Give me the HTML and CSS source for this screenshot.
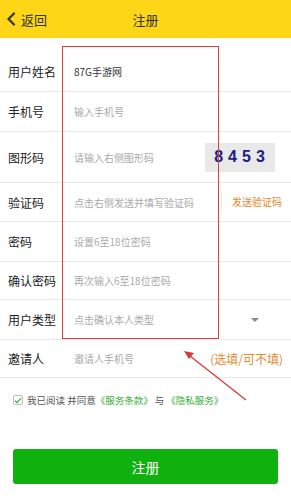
FILE: index.html
```html
<!DOCTYPE html>
<html lang="zh">
<head>
<meta charset="utf-8">
<title>注册</title>
<link rel="stylesheet" href="styles.css">
</head>
<body>
<div class="page">
  <header class="topbar">
    <div class="back">
      <svg class="chev" width="10" height="14" viewBox="0 0 10 14"><path d="M8 1.5 L2.5 7 L8 12.5" fill="none" stroke="#333" stroke-width="2.2" stroke-linecap="round" stroke-linejoin="round"/></svg>
      <span>返回</span>
    </div>
    <div class="title">注册</div>
    <div></div>
  </header>

  <form class="form">
    <div class="row r1"><span class="label">用户姓名</span><span class="field value">87G手游网</span></div>
    <div class="row r2"><span class="label">手机号</span><span class="field">输入手机号</span></div>
    <div class="row r3"><span class="label">图形码</span><span class="field">请输入右侧图形码</span><span class="captcha">8453</span></div>
    <div class="row r4"><span class="label">验证码</span><span class="field">点击右侧发送并填写验证码</span><span class="send">发送验证码</span></div>
    <div class="row r5"><span class="label">密码</span><span class="field">设置6至18位密码</span></div>
    <div class="row r6"><span class="label">确认密码</span><span class="field">再次输入6至18位密码</span></div>
    <div class="row r7"><span class="label">用户类型</span><span class="field">点击确认本人类型</span><span class="caret"></span></div>
    <div class="row r8"><span class="label">邀请人</span><span class="field">邀请人手机号</span><span class="optional">(选填/可不填)</span></div>
  </form>

  <div class="agree">
    <span class="check"><svg width="8" height="7" viewBox="0 0 8 7"><path d="M1 3.6 L3 5.6 L7 1.2" fill="none" stroke="#2fa82f" stroke-width="1.2"/></svg></span>
    <span>我已阅读 并同意</span><span class="link">《服务条款》</span><span class="and">与</span><span class="link">《隐私服务》</span>
  </div>

  <div class="btn-wrap"><button class="submit" type="button">注册</button></div>

  <div class="annot-box"></div>
  <svg class="annot-arrow" width="291" height="500" viewBox="0 0 291 500">
    <line x1="246" y1="400" x2="190" y2="356" stroke="#d6393a" stroke-width="1.3"/>
    <polygon points="184,351 194,353 189,359" fill="#d6393a"/>
  </svg>
</div>
</body>
</html>
```

FILE: styles.css
```css
* { box-sizing: border-box; }
html, body { margin: 0; padding: 0; background: #fff; }
body {
  font-family: "Noto Sans CJK SC", "Noto Sans", "Liberation Sans", sans-serif;
  color: #333;
}
.page {
  position: relative;
  width: 291px;
  height: 500px;
  overflow: hidden;
}
.topbar {
  height: 38px;
  background: #fcd617;
  display: grid;
  grid-template-columns: 1fr auto 1fr;
  align-items: center;
}
.back {
  display: flex;
  align-items: center;
  gap: 5px;
  padding-left: 6px;
  font-size: 13px;
  color: #333;
}
.chev { display: block; }
.title { font-size: 13px; color: #333; }

.form { margin-top: 14px; }
.row {
  display: flex;
  align-items: center;
  border-bottom: 1px solid #e8e8e8;
  height: 40px;
}
.r3 { height: 51px; }
.r4 { height: 39px; }
.r6 { height: 38px; }
.r8 { height: 38px; }
.label {
  width: 74px;
  padding-left: 8px;
  font-size: 12px;
  color: #222;
  flex: none;
}
.field {
  flex: 1;
  font-size: 10px;
  color: #aaa;
  white-space: nowrap;
}
.field.value { color: #333; }
.captcha {
  width: 70px;
  height: 29px;
  margin-right: 16px;
  background: #e9e9e9;
  color: #1d1d86;
  font-family: "Liberation Sans", sans-serif;
  font-weight: bold;
  font-size: 16px;
  letter-spacing: 5px;
  display: flex;
  align-items: center;
  justify-content: center;
  padding-left: 4px;
}
.send {
  font-size: 10px;
  color: #e8872c;
  border-left: 1px solid #eee;
  padding: 4px 9px 4px 10px;
  line-height: 14px;
}
.caret {
  width: 0; height: 0;
  border-left: 4px solid transparent;
  border-right: 4px solid transparent;
  border-top: 4px solid #8a8a8a;
  margin-right: 32px;
}
.optional {
  font-size: 12px;
  color: #e8892e;
  margin-right: 8px;
  white-space: nowrap;
}
.agree {
  display: flex;
  align-items: center;
  margin-top: 15px;
  padding-left: 13px;
  font-size: 9.5px;
  color: #555;
  white-space: nowrap;
}
.and { margin: 0 2px; }
.check {
  width: 10px; height: 10px;
  border: 1px solid #bbb;
  border-radius: 2px;
  display: flex;
  align-items: center;
  justify-content: center;
  margin-right: 4px;
}
.check svg { display: block; }
.link { color: #35ad35; }
.btn-wrap { padding: 0 13px; margin-top: 42px; }
.submit {
  width: 100%;
  height: 35px;
  border: none;
  border-radius: 3px;
  background: #0fb10f;
  color: #fff;
  font-family: inherit;
  font-size: 14px;
}
.annot-box {
  position: absolute;
  left: 62px;
  top: 46px;
  width: 157px;
  height: 293px;
  border: 1.5px solid #d9403f;
  pointer-events: none;
}
.annot-arrow {
  position: absolute;
  left: 0;
  top: 0;
  pointer-events: none;
}
```
